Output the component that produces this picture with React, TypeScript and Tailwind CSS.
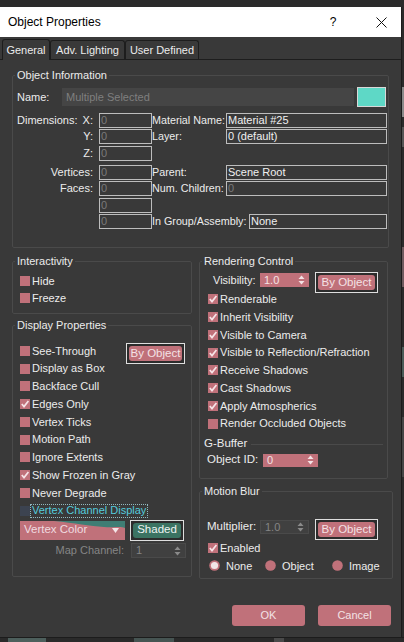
import React from 'react';

// 3ds Max style "Object Properties" dialog

const Check = ({ label, checked = false }: { label: string; checked?: boolean }) => (
  <div className="flex h-[17.75px] items-center">
    <span className="flex h-[10px] w-[10px] items-center justify-center bg-[#c0717a]">
      {checked && (
        <svg width="10" height="10" viewBox="0 0 10 10">
          <path d="M1.8 5 L4 7.6 L8.4 2" fill="none" stroke="#f6e4e7" strokeWidth="1.7" />
        </svg>
      )}
    </span>
    <span className="ml-[2px]">{label}</span>
  </div>
);

const Arrows = ({ color }: { color: string }) => (
  <svg width="7" height="10" viewBox="0 0 7 10" className="mr-[4px]">
    <path d="M3.5 0.5 L6.5 4 L0.5 4 Z" fill={color} />
    <path d="M0.5 6 L6.5 6 L3.5 9.5 Z" fill={color} />
  </svg>
);

const Spin = ({ value, className, disabled = false }: { value: string; className: string; disabled?: boolean }) => (
  <div
    className={`flex items-center justify-between ${
      disabled ? 'border border-[#4a4a4a] bg-[#404040] text-[#858585]' : 'bg-[#c0717a] text-[#f3e3e5]'
    } ${className}`}
  >
    <span className="pl-[4px] leading-none">{value}</span>
    <Arrows color={disabled ? '#8a8a8a' : '#f3e3e5'} />
  </div>
);

const FocusButton = ({ label, className, teal = false }: { label: string; className: string; teal?: boolean }) => (
  <div className={`border border-[#dedede] bg-[#2c2c2c] p-[2px] ${className}`}>
    <div
      className={`flex h-full items-center justify-center rounded-[3px] text-[11.5px] ${
        teal ? 'bg-[#3b7362] text-[#eef4f2]' : 'bg-[#c0717a] text-[#f4e2e5]'
      }`}
    >
      {label}
    </div>
  </div>
);

const Group = ({ title, className, children }: { title: string; className: string; children: React.ReactNode }) => (
  <fieldset className={`rounded-[2px] border border-[#4a4a4a] ${className}`}>
    <legend className="ml-[2px] px-[2px] text-[11px] leading-[14px] text-[#ececec]">{title}</legend>
    {children}
  </fieldset>
);

const Field = ({ value = '0', className, dim = false }: { value?: string; className: string; dim?: boolean }) => (
  <div
    className={`flex h-[15px] items-center border border-[#bdbdbd] pl-[1px] leading-none ${
      dim ? 'text-[#7a7a7a]' : 'text-[#f0f0f0]'
    } ${className}`}
  >
    {value}
  </div>
);

const DimRow = ({
  left,
  axis,
  right,
  rightValue,
  className = '',
  wide = false,
}: {
  left?: string;
  axis?: string;
  right?: string;
  rightValue?: string;
  className?: string;
  wide?: boolean;
}) => (
  <div className={`flex h-[15px] items-center ${className}`}>
    <div className="flex w-[86px] items-center justify-between pl-[4px] pr-[6px]">
      <span>{left}</span>
      <span>{axis}</span>
    </div>
    <Field className="w-[53px]" dim />
    {right && (
      <>
        <span className={`text-[10.75px] ${wide ? 'w-[97px]' : 'w-[74px]'}`}>{right}</span>
        <Field
          value={rightValue}
          className={wide ? 'w-[138px]' : 'w-[161px]'}
          dim={rightValue === '0'}
        />
      </>
    )}
  </div>
);

const Radio = ({ label, on = false, className }: { label: string; on?: boolean; className: string }) => (
  <div className={`flex items-center ${className}`}>
    <svg width="11" height="11" viewBox="0 0 11 11">
      <circle cx="5.5" cy="5.5" r="5.3" fill="#c0717a" />
      {on && <circle cx="5.5" cy="5.5" r="3.6" fill="#f1e4e6" />}
    </svg>
    <span className="ml-[6px]">{label}</span>
  </div>
);

export default function App() {
  return (
    <div className="flex h-[642px] w-[404px] flex-col overflow-hidden whitespace-nowrap bg-[#2c2c2c] font-['Liberation_Sans',Arial,sans-serif] text-[11px] text-[#ececec]">
      <div className="h-[7px] shrink-0 bg-[#2b2b2b]" />
      <div className="flex h-[630px] shrink-0">
        {/* dialog */}
        <div className="flex h-full w-[401px] flex-col bg-[#393939]">
          {/* title bar */}
          <div className="flex h-[30px] shrink-0 items-center bg-white">
            <span className="pl-[8px] text-[12px] text-black">Object Properties</span>
            <div className="ml-auto flex items-center">
              <span className="w-[20px] text-center text-[12px] text-black">?</span>
              <span className="ml-[28px] mr-[10px] flex w-[20px] justify-center">
                <svg width="11" height="11" viewBox="0 0 11 11">
                  <path d="M0.5 0.5 L10.5 10.5 M10.5 0.5 L0.5 10.5" stroke="#111" strokeWidth="1" />
                </svg>
              </span>
            </div>
          </div>

          {/* tabs */}
          <div className="flex h-[23px] shrink-0 items-end border-b border-[#1d1d1d]">
            <div className="relative z-10 mb-[-1px] ml-[2px] flex h-[21px] w-[48px] items-center justify-center rounded-t-[3px] border border-b-0 border-[#1d1d1d] bg-[#393939]">
              General
            </div>
            <div className="flex h-[19px] w-[75px] items-center justify-center rounded-t-[3px] border border-b-0 border-[#1d1d1d]">
              Adv. Lighting
            </div>
            <div className="flex h-[19px] w-[74px] items-center justify-center rounded-t-[3px] border border-b-0 border-[#1d1d1d]">
              User Defined
            </div>
          </div>

          {/* Object Information */}
          <Group title="Object Information" className="ml-[12px] mt-[8px] w-[377px] pb-[18px]">
            <div className="mt-[5px] flex h-[20px] items-center pl-[4px]">
              <span className="w-[45px]">Name:</span>
              <div className="flex h-[18px] w-[292px] items-center bg-[#454545] pl-[4px] text-[#7f7f7f]">
                Multiple Selected
              </div>
              <div className="ml-[3px] h-[20px] w-[29px] border border-[#d8d8d8] bg-[#5ed8c6]" />
            </div>
            <DimRow className="mt-[6px]" left="Dimensions:" axis="X:" right="Material Name:" rightValue="Material #25" />
            <DimRow className="mt-[1px]" axis="Y:" right="Layer:" rightValue="0 (default)" />
            <DimRow className="mt-[2px]" axis="Z:" />
            <DimRow className="mt-[4px]" axis="Vertices:" right="Parent:" rightValue="Scene Root" />
            <DimRow className="mt-[1px]" axis="Faces:" right="Num. Children:" rightValue="0" />
            <DimRow className="mt-[2px]" />
            <DimRow className="mt-[1px]" right="In Group/Assembly:" rightValue="None" wide />
          </Group>

          <div className="ml-[12px] mt-[6px] flex">
            {/* left column */}
            <div className="w-[180px]">
              <Group title="Interactivity" className="w-[180px] pb-[6px] pt-[4px]">
                <div className="pl-[7px]">
                  <div className="flex h-[17.5px] items-center">
                    <span className="h-[10px] w-[10px] bg-[#c0717a]" />
                    <span className="ml-[2px]">Hide</span>
                  </div>
                  <div className="flex h-[17.5px] items-center">
                    <span className="h-[10px] w-[10px] bg-[#c0717a]" />
                    <span className="ml-[2px]">Freeze</span>
                  </div>
                </div>
              </Group>

              <Group title="Display Properties" className="mt-[4px] w-[180px] pb-[18px] pt-[10px]">
                <div className="pl-[7px]">
                  <div className="flex h-[17.75px] items-center">
                    <span className="h-[10px] w-[10px] bg-[#c0717a]" />
                    <span className="ml-[2px]">See-Through</span>
                    <FocusButton label="By Object" className="ml-auto mr-[6px] mt-[6px] h-[21px] w-[59px]" />
                  </div>
                  <Check label="Display as Box" />
                  <Check label="Backface Cull" />
                  <Check label="Edges Only" checked />
                  <Check label="Vertex Ticks" />
                  <Check label="Motion Path" />
                  <Check label="Ignore Extents" />
                  <Check label="Show Frozen in Gray" checked />
                  <Check label="Never Degrade" />
                  <div className="flex h-[17.75px] items-center">
                    <span className="h-[10px] w-[10px] bg-[#3c4350]" />
                    <span className="flex h-[14px] items-center border border-dotted border-[#8fb9bf] px-[1px] text-[#55cbdc]">
                      Vertex Channel Display
                    </span>
                  </div>
                  <div className="flex h-[21px] items-center">
                    <div className="relative flex h-[19px] w-[105px] items-center justify-between overflow-hidden bg-[#c0717a] text-[11.5px] text-[#f0dce0]">
                      <svg className="absolute left-0 top-0" width="105" height="10" viewBox="0 0 105 10">
                        <path d="M34 0 C55 2, 70 5, 84 6 C94 7, 100 5, 105 7 L105 0 Z" fill="#3f7d74" />
                      </svg>
                      <span className="relative pl-[4px]">Vertex Color</span>
                      <svg className="relative mr-[6px]" width="7" height="5" viewBox="0 0 7 5">
                        <path d="M0 0 L7 0 L3.5 5 Z" fill="#f4e6e8" />
                      </svg>
                    </div>
                    <FocusButton label="Shaded" teal className="ml-[5px] h-[21px] w-[54px]" />
                  </div>
                  <div className="mt-[2.5px] flex h-[15px] items-center">
                    <span className="w-[105px] pr-[1px] text-right text-[#858585]">Map Channel:</span>
                    <Spin value="1" disabled className="ml-[6px] h-[15px] w-[55px]" />
                  </div>
                </div>
              </Group>
            </div>

            {/* right column */}
            <div className="ml-[7px] w-[189px]">
              <Group title="Rendering Control" className="w-[189px] pb-[9px]">
                <div className="mt-[4px] flex h-[18.5px] items-start pl-[13px]">
                  <span className="mt-[1px] flex h-[14px] w-[47px] items-center">Visibility:</span>
                  <Spin value="1.0" className="mt-[1px] h-[14px] w-[49px]" />
                  <FocusButton label="By Object" className="relative z-10 ml-[6px] h-[21px] w-[63px] shrink-0" />
                </div>
                <div className="pl-[8px]">
                  <Check label="Renderable" checked />
                  <Check label="Inherit Visibility" checked />
                  <Check label="Visible to Camera" checked />
                  <Check label="Visible to Reflection/Refraction" checked />
                  <Check label="Receive Shadows" checked />
                  <Check label="Cast Shadows" checked />
                  <Check label="Apply Atmospherics" checked />
                  <Check label="Render Occluded Objects" />
                </div>
                <div className="mt-[4.5px] flex h-[14px] items-center pl-[4px] pr-[4px]">
                  <span className="text-[11.5px]">G-Buffer</span>
                  <span className="ml-[4px] h-px flex-1 bg-[#4a4a4a]" />
                </div>
                <div className="flex h-[18px] items-center pl-[7px]">
                  <span className="w-[56px] text-[11.5px]">Object ID:</span>
                  <Spin value="0" className="h-[13px] w-[55px]" />
                </div>
              </Group>

              <Group title="Motion Blur" className="mt-[5px] w-[189px] pb-[3px]">
                <div className="mt-[21px] flex h-[21px] items-start pl-[7px]">
                  <span className="mt-[1px] flex h-[14px] w-[53px] items-center text-[11.5px]">Multiplier:</span>
                  <Spin value="1.0" disabled className="mt-[1px] h-[14px] w-[49px]" />
                  <FocusButton label="By Object" className="ml-[6px] h-[21px] w-[63px] shrink-0" />
                </div>
                <div className="mt-[-1px] pl-[8px]">
                  <Check label="Enabled" checked />
                </div>
                <div className="flex h-[18px] items-center pl-[9px]">
                  <Radio label="None" on className="w-[56px]" />
                  <Radio label="Object" className="w-[67px]" />
                  <Radio label="Image" className="w-[60px]" />
                </div>
              </Group>
            </div>
          </div>

          {/* footer */}
          <div className="mt-[26px] flex justify-end gap-[13px] pr-[10px]">
            <button className="flex h-[21px] w-[73px] items-center justify-center rounded-[3px] bg-[#c0717a] text-[11px] text-[#f3e2e5]">
              OK
            </button>
            <button className="flex h-[21px] w-[73px] items-center justify-center rounded-[3px] bg-[#c0717a] text-[11px] text-[#f3e2e5]">
              Cancel
            </button>
          </div>
        </div>
        {/* edge of the window behind */}
        <div className="w-px bg-[#1c1c1c]" />
        <div className="flex w-[2px] flex-col bg-[#2b2b2b]">
          <div className="mt-[80px] h-[30px] bg-[#8a8a8a]" />
          <div className="mt-[10px] h-[20px] bg-[#555555]" />
          <div className="mt-[100px] h-[40px] bg-[#6e5a5e]" />
          <div className="mt-[60px] h-[30px] bg-[#4a5b58]" />
          <div className="mt-[40px] h-[60px] bg-[#454545]" />
        </div>
      </div>
      <div className="flex h-[5px] shrink-0 border-t border-[#1c1c1c] bg-[#2a2a2a]">
        <span className="ml-[8px] w-[38px] bg-[#4d5f5c]" />
        <span className="ml-[88px] w-[40px] bg-[#465452]" />
        <span className="ml-[100px] w-[10px] bg-[#4a4a4a]" />
      </div>
    </div>
  );
}
